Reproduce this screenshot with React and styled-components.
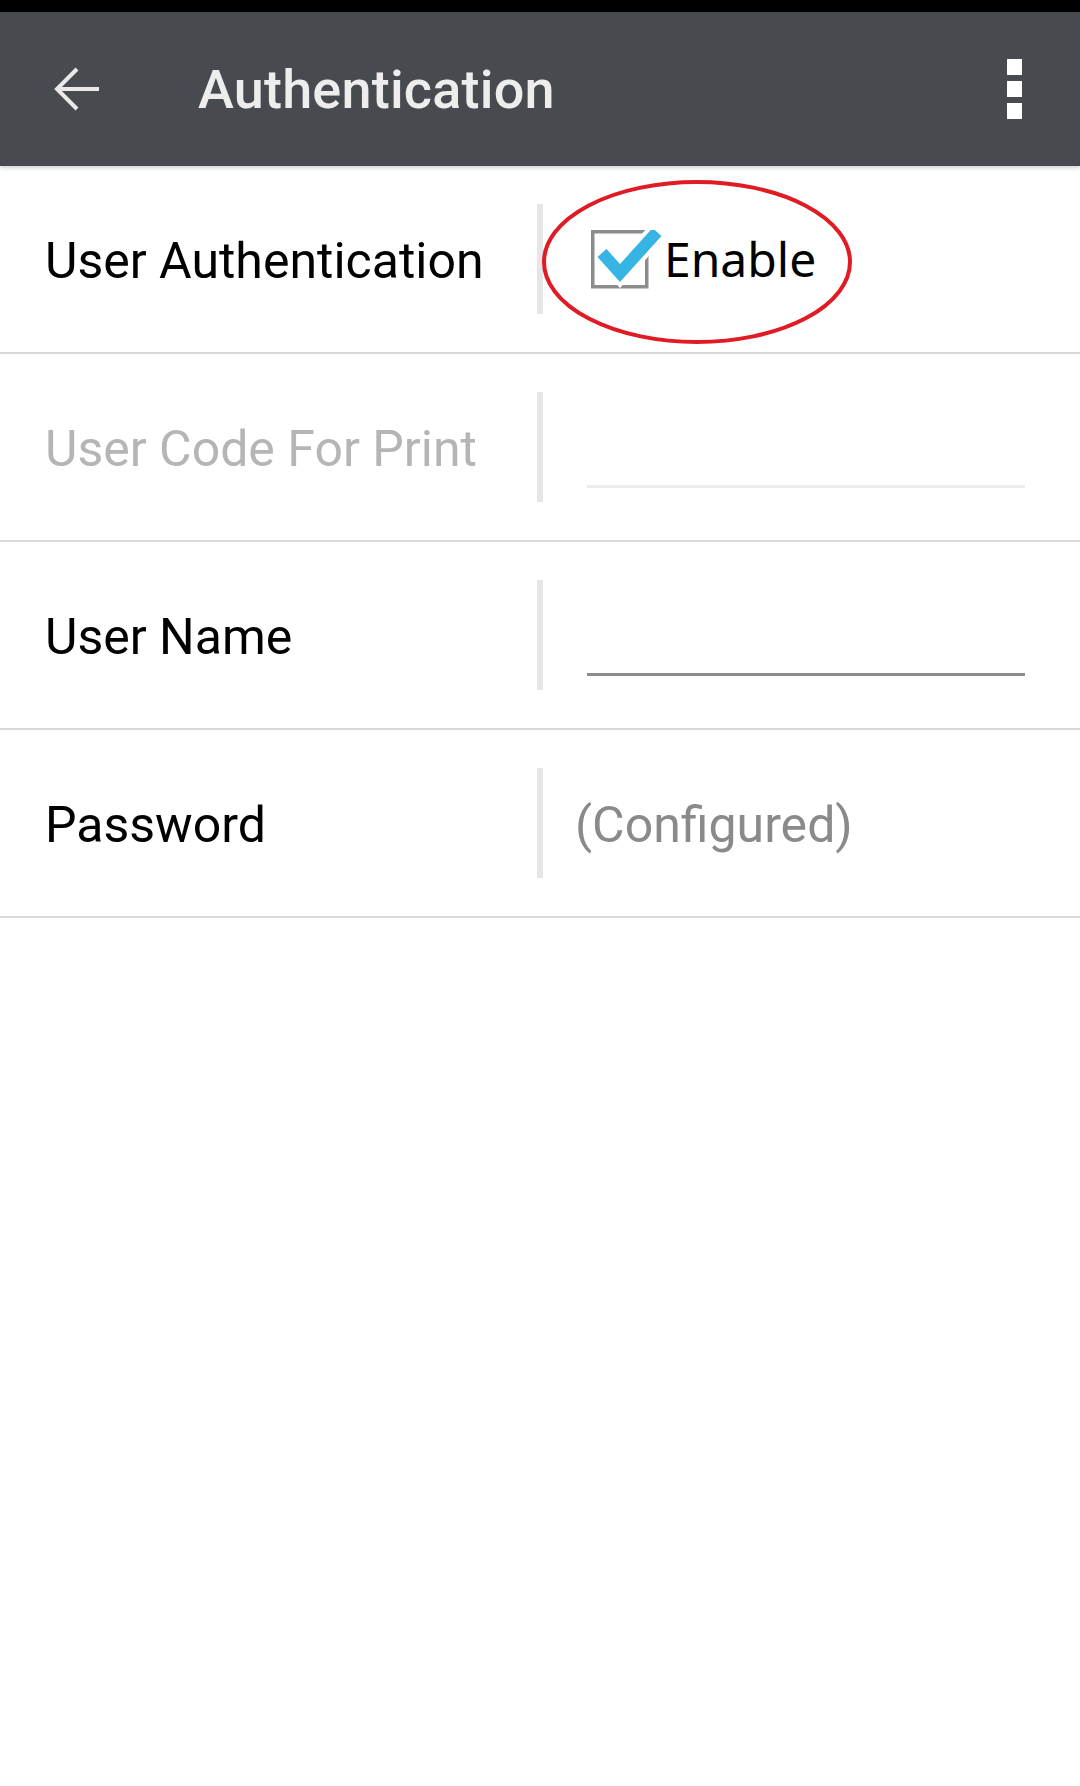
import React from 'react';
import styled, { createGlobalStyle } from 'styled-components';

const GlobalStyle = createGlobalStyle`
  html, body {
    margin: 0;
    padding: 0;
    background: #ffffff;
  }
  body {
    font-family: Roboto, "Noto Sans", sans-serif;
  }
`;

const ROWS = [
  { label: 'User Authentication', kind: 'checkbox' },
  { label: 'User Code For Print', kind: 'input', disabled: true },
  { label: 'User Name', kind: 'input' },
  { label: 'Password', kind: 'text', value: '(Configured)' },
];

const BackIcon = () => (
  <svg width="46" height="44" viewBox="0 0 46 44">
    <path
      d="M45 22 H4 M23 2 L3 22 L23 42"
      fill="none"
      stroke="#e9e9e9"
      strokeWidth="4"
      strokeLinejoin="miter"
    />
  </svg>
);

const CheckIcon = () => (
  <svg width="72" height="62" viewBox="0 0 72 62">
    <rect x="1.75" y="1.75" width="54" height="55" fill="none" stroke="#8c8c8c" strokeWidth="3.5" />
    <path d="M11 23 L29 43 L66 2" fill="none" stroke="#ffffff" strokeWidth="20" />
    <path d="M11 23 L29 43 L66 2" fill="none" stroke="#36b4e3" strokeWidth="12" />
  </svg>
);

const App = () => {
  return (
    <>
      <GlobalStyle />
      <Screen>
        <StatusBar />
        <Toolbar>
          <BackButton>
            <BackIcon />
          </BackButton>
          <Title>Authentication</Title>
          <Menu>
            <Dot />
            <Dot />
            <Dot />
          </Menu>
        </Toolbar>
        <List>
          {ROWS.map((row) => (
            <Row key={row.label}>
              <Label disabled={row.disabled}>{row.label}</Label>
              <Separator />
              <Value>
                {row.kind === 'checkbox' && (
                  <CheckLabel>
                    <CheckIcon />
                    <CheckText>Enable</CheckText>
                  </CheckLabel>
                )}
                {row.kind === 'input' && <Field disabled={row.disabled} />}
                {row.kind === 'text' && <ValueText>{row.value}</ValueText>}
              </Value>
              {row.kind === 'checkbox' && (
                <Highlight width="320" height="170" viewBox="0 0 320 170">
                  <ellipse cx="160" cy="85" rx="153" ry="80" fill="none" stroke="#e01b24" strokeWidth="4" />
                </Highlight>
              )}
            </Row>
          ))}
        </List>
      </Screen>
    </>
  );
};

const Screen = styled.div`
  width: 1080px;
  min-height: 1786px;
  background: #ffffff;
`;

const StatusBar = styled.div`
  height: 12px;
  background: #000000;
`;

const Toolbar = styled.header`
  position: relative;
  z-index: 1;
  height: 154px;
  display: flex;
  align-items: center;
  background: #474a4f;
  box-shadow: 0 2px 4px rgba(0, 0, 0, 0.18);
`;

const BackButton = styled.div`
  display: flex;
  margin-left: 54px;
  width: 46px;
`;

const Title = styled.h1`
  flex: 1;
  margin: 0 0 0 98px;
  font-family: Roboto, sans-serif;
  font-weight: 500;
  font-size: 54px;
  color: #ededed;
  letter-spacing: 0.2px;
`;

const Menu = styled.div`
  display: flex;
  flex-direction: column;
  gap: 6px;
  margin-right: 58px;
`;

const Dot = styled.span`
  width: 15px;
  height: 16px;
  background: #ffffff;
`;

const List = styled.div`
  display: flex;
  flex-direction: column;
`;

const Row = styled.div`
  position: relative;
  height: 186px;
  display: flex;
  align-items: center;
  border-bottom: 2px solid #d9d9d9;
`;

const Label = styled.div`
  width: 492px;
  padding-left: 45px;
  margin-top: 4px;
  font-family: Roboto, sans-serif;
  font-size: 50px;
  color: ${(props) => (props.disabled ? '#b5b5b5' : '#000000')};
`;

const Separator = styled.div`
  width: 6px;
  height: 110px;
  background: #e6e6e6;
`;

const Value = styled.div`
  flex: 1;
  display: flex;
  align-items: center;
  padding: 0 55px 0 32px;
`;

const CheckLabel = styled.label`
  display: flex;
  align-items: center;
  margin-left: 16px;
  margin-top: 4px;
`;

const CheckText = styled.span`
  margin-left: 1px;
  margin-top: -6px;
  font-family: "Noto Sans", sans-serif;
  font-size: 48px;
  color: #000000;
`;

const Field = styled.div`
  flex: 1;
  height: 78px;
  margin-left: 12px;
  border-bottom: 3px solid ${(props) => (props.disabled ? '#ececec' : '#8c8c8c')};
  transform: translateY(39px);
  margin-top: -78px;
`;

const ValueText = styled.span`
  margin-top: 4px;
  font-family: Roboto, sans-serif;
  font-size: 50px;
  color: #8a8a8a;
`;

const Highlight = styled.svg`
  position: absolute;
  left: 537px;
  top: 11px;
  pointer-events: none;
`;

export default App;
